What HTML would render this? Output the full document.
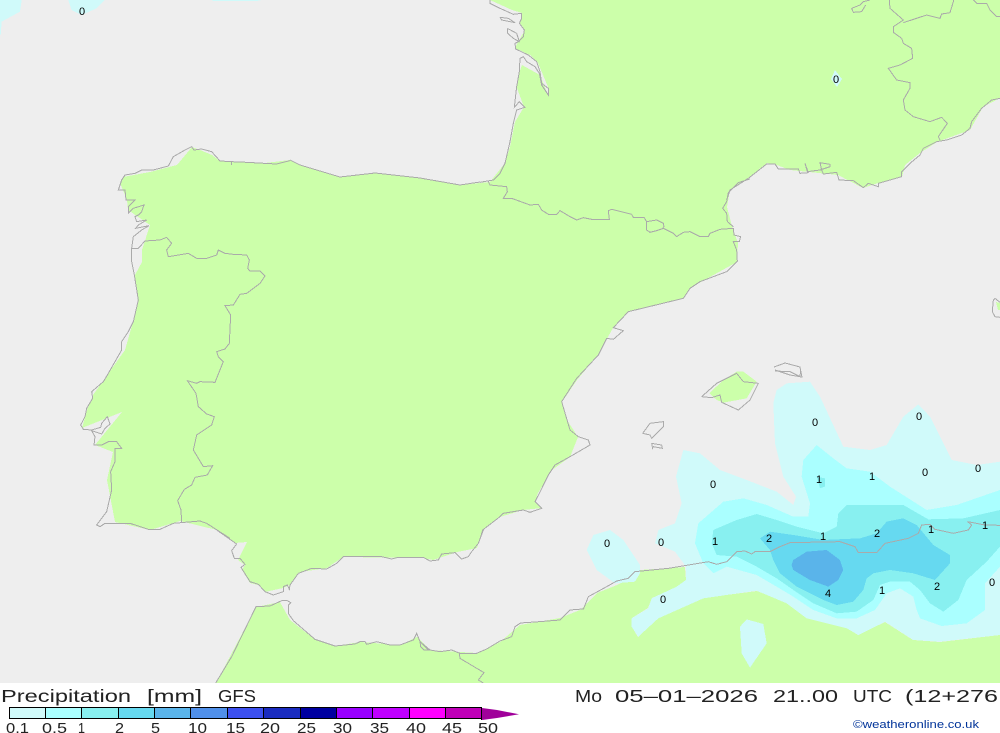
<!DOCTYPE html>
<html><head><meta charset="utf-8"><title>Precipitation GFS</title>
<style>
html,body{margin:0;padding:0;background:#fff;width:1000px;height:733px;overflow:hidden}
svg{display:block}
text{font-family:"Liberation Sans",sans-serif}
.c polyline{fill:none;stroke:#aaa;stroke-width:1;vector-effect:non-scaling-stroke}
.n text{font-size:11px;text-anchor:middle;fill:#000}
.l text{font-size:15px;fill:#222}
.h text{font-size:17.5px;fill:#222}
</style></head><body>
<svg width="1000" height="733" viewBox="0 0 1000 733" xmlns="http://www.w3.org/2000/svg">
<rect width="1000" height="683" fill="#eee"/>
<g shape-rendering="crispEdges">
<polygon fill="#ccffaa" points="490,0 512,10 522,13 520,23 525,30 518,42 515,48 530,55 538,63 548,87 548,95 540,75 522,65 518,77 517,88 524,107 515,122 510,147 505,163 490,182 460,185 420,178 375,173 340,177 300,165 290,160 265,163 232,162 220,161 212,155 200,150 192,147 177,165 150,172 123,177 120,183 127,200 128,210 150,225 142,250 142,262 135,275 138,303 133,322 125,350 93,395 87,410 82,428 122,412 95,445 113,452 107,480 115,522 150,530 180,521 217,530 235,543 247,542 238,560 245,565 242,570 250,583 258,585 265,592 283,588 290,585 300,572 327,568 343,557 423,558 433,560 457,552 477,548 483,530 500,517 523,510 542,508 535,502 538,493 552,470 570,457 578,437 567,420 562,402 577,380 598,355 608,337 613,328 628,312 683,298 690,288 737,262 738,243 740,248 733,230 727,207 730,190 748,178 767,163 777,165 790,170 838,175 863,188 878,183 902,177 905,165 920,153 937,142 970,130 983,107 1000,98 1000,0"/>
<polygon fill="#ccffaa" points="216,683 256,607 280,602 290,620 313,638 335,646 360,642 400,645 417,637 430,650 477,653 500,642 520,625 560,618 580,610 597,593 617,585 640,573 640,570 685,567 686,580 677,587 652,598 648,608 632,618 632,627 638,637 658,618 703,598 757,591 787,603 807,618 847,628 858,635 885,622 913,640 940,642 1000,635 1000,683"/>
<g transform="translate(580 370) scale(.33333)">
<polygon fill="#ccffaa" points="388,70 430,30 470,5 490,5 530,35 500,85 430,98 410,90"/>
<polygon fill="#d0fafa" points="590,60 620,40 690,35 720,80 790,230 870,240 920,225 970,140 1015,103 1050,140 1115,270 1190,285 1260,275 1260,795 1080,815 1000,810 915,755 835,795 800,775 680,745 620,700 530,662 370,685 235,745 175,800 155,770 155,745 205,715 215,685 290,650 318,630 318,590 285,545 225,520 235,480 285,460 305,400 288,320 310,240 360,250 420,300 500,330 590,365 640,405 648,380 610,320 585,220 580,100"/>
<polygon fill="#d0fafa" points="20,540 40,495 90,480 130,510 180,585 180,610 165,635 105,640 50,600"/>
<polygon fill="#d0fafa" points="480,770 500,748 550,762 560,820 510,893 485,850"/>
<polygon fill="#aaffff" points="710,225 760,265 800,295 870,305 930,350 1040,420 1130,405 1260,360 1260,590 1215,640 1215,720 1160,760 1085,768 1020,745 1010,720 1000,680 960,655 920,670 885,720 830,745 770,745 700,720 640,680 590,650 530,615 440,590 400,610 370,580 345,520 355,460 430,395 490,385 560,405 640,440 685,440 690,400 665,320 670,270"/>
<polygon fill="#88f0f0" points="710,320 735,325 735,350 720,355"/>
<polygon fill="#88f0f0" points="800,405 970,405 1045,448 1150,445 1260,420 1260,530 1220,575 1160,630 1135,690 1090,725 1050,700 1020,660 990,635 930,635 900,645 880,690 830,725 770,730 700,700 640,660 590,625 530,590 470,560 410,555 395,520 400,480 470,450 530,432 590,450 650,470 730,490 770,470 775,430"/>
<polygon fill="#66d9f0" points="540,505 570,485 640,495 730,510 840,505 890,490 920,455 970,445 1010,465 1060,525 1110,555 1110,580 1065,630 1000,610 930,600 880,610 860,625 850,660 820,695 770,705 730,690 650,650 600,610 580,570 570,540"/>
<polygon fill="#5ab4ea" points="640,570 680,545 740,540 780,570 790,600 775,630 745,650 690,630 640,600 635,585"/>
</g>
<g transform="scale(.33333)" fill="#d0fafa">
<polygon points="0,0 65,0 60,35 5,65 2,105 0,105"/>
<polygon points="205,0 315,0 290,25 245,45 215,30"/>
<polygon points="635,0 785,0 770,3 640,3"/>
</g>
<polygon fill="#d0fafa" points="835,70 842,79 837,87 831,79"/>
<polygon fill="#ccffaa" points="996,302 1000,303 1000,310 998,310"/>
</g>
<g class="c" shape-rendering="crispEdges">
<g transform="translate(480 0) scale(.33333)">
<polyline points="30,0 30,10 60,25 100,43 125,40 125,55 118,70 133,90 130,110 115,125 105,130 107,147 145,165 170,185 180,215 185,250 205,265 205,285 185,255 178,220 165,200 140,185 130,170 120,175 118,215 110,260 103,322 118,305 135,322 110,330 100,370 90,425 75,490 60,520 40,540 0,547"/>
<polyline points="60,52 85,55 105,68 65,60 60,52"/>
<polyline points="82,85 110,100 118,125 100,115 83,100 82,85"/>
<polyline points="25,545 30,555 80,560 82,575 70,595 95,595 150,615 175,613 185,630 205,643 230,643 240,632 270,650 290,660 310,653 335,658 388,658 385,632 395,628 455,643 460,652 492,652 500,665 500,690 510,697 530,692 550,685 580,700 590,710 610,697 630,695 660,710 685,710 690,700 720,688 760,685 762,705 782,710 778,725 760,725 770,750"/>
<polyline points="500,665 530,660 550,670 552,680 545,688"/>
<polyline points="810,537 775,548 745,578 740,605 728,625 740,640 742,665 760,680"/>
</g>
<polyline points="290,160 300,165 340,177 375,173 420,178 460,185 480,182"/>
<g transform="translate(70 140) scale(.33333)">
<polyline points="660,62 620,72 530,67 485,65 485,75"/>
<polyline points="485,65 450,63 425,35 395,27 372,30 365,20 345,30 310,50 295,78 250,90 215,90 195,100 165,105 155,120 145,150 165,150 168,180 195,180 175,200 175,220 190,205 222,195 215,215 205,225 195,230 200,245 230,240 205,255 197,265 237,257 215,270 190,290 185,325 205,325 225,303 270,300 290,292 305,310 290,330 295,350 355,340 380,355 410,355 440,345 445,330 465,340 490,343 530,345 538,360 533,385 540,393 570,393 585,408 570,430 530,460 510,463 490,495 465,497 482,525 478,610 465,627 440,635 445,650 460,665 435,727 390,725 380,730 352,722 378,760 385,800 410,822 433,830 425,855 380,885 370,930 400,980 428,977 412,1005 375,1012 365,1035 343,1048 323,1082 333,1110 335,1148"/>
<polyline points="185,325 185,365 193,405 205,480 190,545 175,575 155,605 155,630 115,700 100,725 65,755 68,775 50,805 45,830 32,855 40,868 65,870 92,862 95,850 112,830 120,852 105,865 95,882 65,872 75,890 72,915 95,915 115,905 140,905 155,925 135,925 135,965 122,995 125,1050 110,1115 80,1155 90,1160 105,1150 180,1150 235,1168 270,1168 310,1150 390,1143 410,1150 480,1195"/>
</g>
<g transform="translate(200 530) scale(.33333)">
<polyline points="50,0 110,42 95,62 103,85 120,85 135,103 123,112 150,155 175,163 195,185 220,195 250,185 250,170 262,165 268,178 270,165 295,130 335,115 380,117 410,100 430,80 545,80 575,87 595,82 670,82 690,93 715,90 725,72 765,68 785,87 805,80 815,65 835,40 850,0"/>
<polyline points="47,459 95,380 168,230 210,228 245,212 262,212 272,218 265,225 265,250 280,272 345,328 405,348 465,342 480,335 495,335 500,343 530,335 570,345 600,345 640,330 650,310 660,335 690,360 720,365 755,360 780,370 830,370 860,357 900,333 935,320 945,290 960,280"/>
<polyline points="778,370 780,385 852,428 835,450 850,459"/>
<polyline points="660,335 662,350 672,360 685,360 665,340"/>
</g>
<polyline points="520,623 535,622 560,620 570,610 583,609"/>
<g transform="translate(580 370) scale(.33333)">
<polyline points="10,718 25,680 80,650 110,633 145,625 165,605 265,595 385,575 410,583 440,575 470,545 495,543 515,552 525,545 570,545 600,530 630,518 780,515 825,530 835,548 890,548 915,520 985,505 1015,490 1025,465 1050,463 1065,478 1120,490 1165,480 1175,465 1163,455 1215,465 1260,466"/>
<polyline points="365,80 410,40 470,10 490,35 535,40 510,90 475,120 425,97 420,75 395,83 365,80"/>
<polyline points="585,3 630,5 660,20 662,0"/>
</g>
<polyline points="774,367 785,363 800,367 802,377 790,375 775,370"/>
<g transform="translate(480 230) scale(.33333)">
<polyline points="0,928 8,900 60,860 70,850 130,840 150,847 185,835 165,815 178,790 205,735 225,705 270,680 330,645 325,630 295,620 270,600 245,515 290,445 355,375 380,325 400,328 430,302 400,293 445,245 610,205 630,175 660,155 740,125 772,93 770,60"/>
<polyline points="488,610 510,580 550,575 550,590 515,625 510,615 488,610"/>
<polyline points="515,640 545,645 547,655 520,650 518,655 515,640"/>
</g>
<g transform="translate(720 0) scale(.33333)">
<polyline points="508,0 510,25 550,60 520,80 520,97 545,115 550,130 575,145 578,175 540,195 505,205 530,240 570,248 570,265 550,300 555,330 580,350 630,365 665,352 682,370 655,410 660,420"/>
<polyline points="550,68 620,45 660,55 665,42 690,38 700,5 700,0"/>
<polyline points="760,0 770,10 800,10 810,30 830,50 840,50"/>
<polyline points="450,0 430,5 420,15 395,25 400,37 425,35 437,15"/>
<polyline points="20,600 30,570 85,535 140,492 165,492 175,507 235,507 240,520 265,518 255,490 262,515 300,510 330,500 330,493 300,488 305,510 310,522 350,517 357,540 400,542 430,563 445,550 475,560 475,550 545,530 545,515 570,490 600,465 610,445 650,425 680,420 725,405 750,385 755,365 785,325 815,300 840,295"/>
</g>
<g transform="translate(940 270) scale(.33333)">
<polyline points="180,97 165,85 160,90 157,125 165,140 180,142"/>
</g>
</g>
<g class="n">
<text x="82" y="15">0</text><text x="836" y="83">0</text>
<text x="815" y="426">0</text><text x="919" y="420">0</text><text x="713" y="488">0</text><text x="925" y="476">0</text><text x="978" y="472">0</text><text x="607" y="547">0</text><text x="661" y="546">0</text><text x="992" y="586">0</text><text x="663" y="603">0</text>
<text x="819" y="483">1</text><text x="872" y="480">1</text><text x="715" y="545">1</text><text x="823" y="540">1</text><text x="931" y="533">1</text><text x="985" y="529">1</text><text x="882" y="594">1</text>
<text x="769" y="542">2</text><text x="877" y="537">2</text><text x="937" y="590">2</text><text x="828" y="597">4</text>
</g>
<g class="h">
<text x="1" y="702" textLength="130" lengthAdjust="spacingAndGlyphs">Precipitation</text>
<text x="147" y="702" textLength="55" lengthAdjust="spacingAndGlyphs">[mm]</text>
<text x="218" y="702" textLength="38" lengthAdjust="spacingAndGlyphs">GFS</text>
<text x="575" y="702" textLength="27" lengthAdjust="spacingAndGlyphs">Mo</text>
<text x="615" y="702" textLength="143" lengthAdjust="spacingAndGlyphs">05–01–2026</text>
<text x="773" y="702" textLength="65" lengthAdjust="spacingAndGlyphs">21..00</text>
<text x="853" y="702" textLength="39" lengthAdjust="spacingAndGlyphs">UTC</text>
<text x="905" y="702" textLength="93" lengthAdjust="spacingAndGlyphs">(12+276</text>
</g>
<g shape-rendering="crispEdges" stroke="#000" stroke-width="1">
<rect x="9.5" y="707.5" width="36" height="11" fill="#d0fafa"/>
<rect x="45.5" y="707.5" width="36" height="11" fill="#aaffff"/>
<rect x="81.5" y="707.5" width="37" height="11" fill="#88f0f0"/>
<rect x="118.5" y="707.5" width="36" height="11" fill="#66d9f0"/>
<rect x="154.5" y="707.5" width="36" height="11" fill="#5ab4ea"/>
<rect x="190.5" y="707.5" width="37" height="11" fill="#5090ea"/>
<rect x="227.5" y="707.5" width="36" height="11" fill="#3c50f0"/>
<rect x="263.5" y="707.5" width="37" height="11" fill="#1a2cc0"/>
<rect x="300.5" y="707.5" width="36" height="11" fill="#0000a0"/>
<rect x="336.5" y="707.5" width="36" height="11" fill="#9900ff"/>
<rect x="372.5" y="707.5" width="37" height="11" fill="#c000ff"/>
<rect x="409.5" y="707.5" width="36" height="11" fill="#ff00ff"/>
<rect x="445.5" y="707.5" width="36" height="11" fill="#c000b8"/>
<line x1="481.5" y1="718" x2="481.5" y2="720"/>
</g>
<polygon points="482,708 497,710 519,714.3 497,718 482,720" fill="#a0009a"/>
<g class="l">
<text x="6" y="733" textLength="23" lengthAdjust="spacingAndGlyphs">0.1</text>
<text x="42" y="733" textLength="25" lengthAdjust="spacingAndGlyphs">0.5</text>
<text x="78" y="733" textLength="7" lengthAdjust="spacingAndGlyphs">1</text>
<text x="115" y="733" textLength="9" lengthAdjust="spacingAndGlyphs">2</text>
<text x="151" y="733" textLength="9" lengthAdjust="spacingAndGlyphs">5</text>
<text x="188" y="733" textLength="19" lengthAdjust="spacingAndGlyphs">10</text>
<text x="226" y="733" textLength="19" lengthAdjust="spacingAndGlyphs">15</text>
<text x="260" y="733" textLength="20" lengthAdjust="spacingAndGlyphs">20</text>
<text x="297" y="733" textLength="19" lengthAdjust="spacingAndGlyphs">25</text>
<text x="333" y="733" textLength="19" lengthAdjust="spacingAndGlyphs">30</text>
<text x="370" y="733" textLength="19" lengthAdjust="spacingAndGlyphs">35</text>
<text x="406" y="733" textLength="20" lengthAdjust="spacingAndGlyphs">40</text>
<text x="442" y="733" textLength="20" lengthAdjust="spacingAndGlyphs">45</text>
<text x="478" y="733" textLength="20" lengthAdjust="spacingAndGlyphs">50</text>
</g>
<text x="853" y="728" font-size="11" fill="#003399" textLength="126" lengthAdjust="spacingAndGlyphs">©weatheronline.co.uk</text>
</svg>
</body></html>
